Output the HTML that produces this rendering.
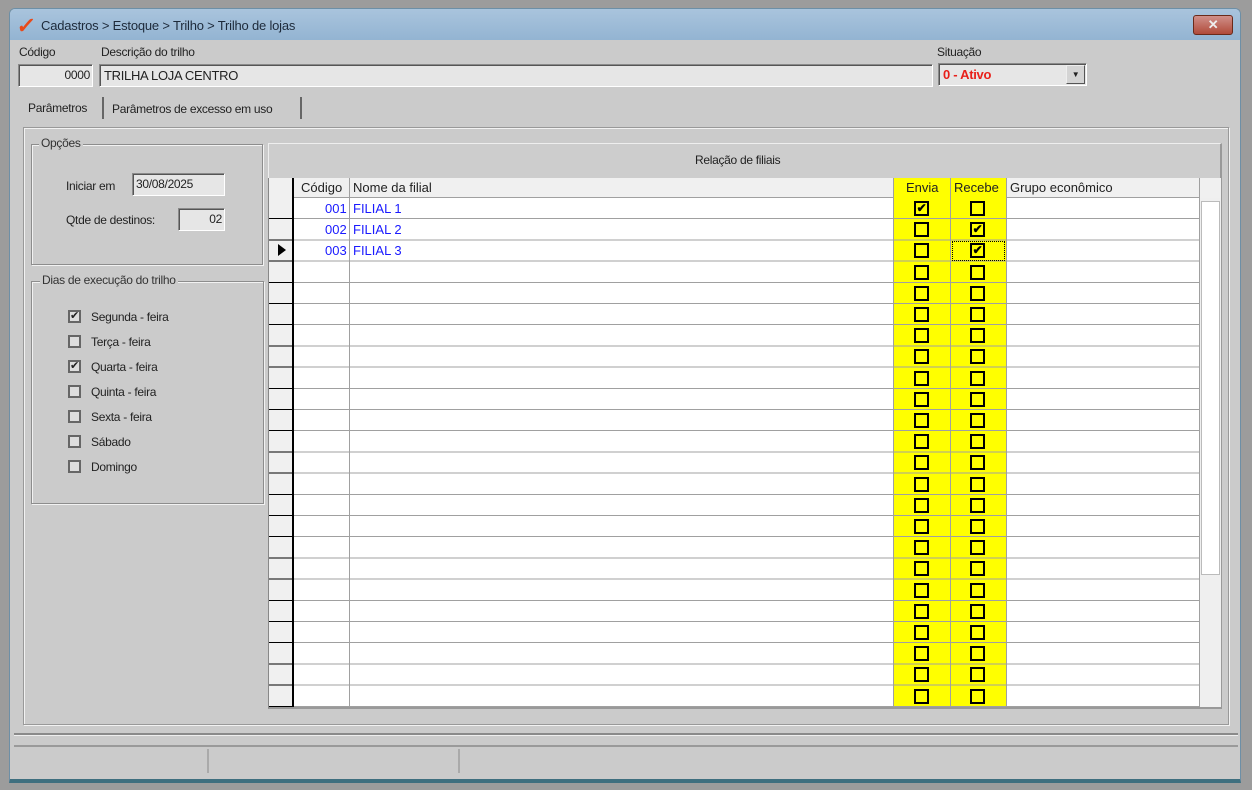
<!DOCTYPE html>
<html><head><meta charset="utf-8"><style>
*{box-sizing:border-box;margin:0;padding:0}
body{width:1252px;height:790px;background:#9c9c9c;font-family:"Liberation Sans",sans-serif;font-size:12px;color:#222;position:relative;overflow:hidden;letter-spacing:-0.3px}
.a{position:absolute}
.win{left:9px;top:8px;width:1232px;height:775px;background:#cbcbcb;border:1px solid #6d8fa6;border-radius:6px 6px 0 0;border-bottom:4px solid #3f6f7f}
.title{left:10px;top:9px;width:1230px;height:31px;background:linear-gradient(#a9c4dd,#93b4d2);border-radius:5px 5px 0 0}
.inp{background:#e6e6e6;border:1px solid #8a8a8a;border-right-color:#fff;border-bottom-color:#fff;box-shadow:inset 1px 1px 0 #555}
.grp{border:1px solid #8d8d8d;box-shadow:1px 1px 0 #f2f2f2, inset 1px 1px 0 #f2f2f2}
.lg{background:#cbcbcb;padding:0 2px;color:#333}
.cb{width:13px;height:13px;border:2px solid #666;background:#ddd;font-size:11px;line-height:9px;text-align:center;color:#222}
.k{width:15px;height:15px;border:2px solid #000;font-size:12px;line-height:11px;text-align:center;color:#000;font-weight:bold}
.v{top:0;width:1px;background:#a0a0a0;height:529px}
.t{font-size:13px;letter-spacing:0}
.blue{color:#1a1aff;font-size:13px;letter-spacing:0}
</style></head><body>
<div class="a win"></div>
<div class="a title"></div>
<div class="a" style="left:17px;top:13px;font-size:22px;color:#e84a1a;font-weight:bold;transform:skewX(-8deg)">✓</div>
<div class="a" style="left:41px;top:18px;font-size:13px;color:#1d2a3a;letter-spacing:-0.2px">Cadastros &gt; Estoque &gt; Trilho &gt; Trilho de lojas</div>
<div class="a" style="left:1193px;top:15px;width:40px;height:20px;background:linear-gradient(#d0908a,#b04a3a);border:1px solid #6a2a1a;border-radius:3px;color:#eee;font-weight:bold;text-align:center;line-height:17px;font-size:13px">✕</div>

<div class="a" style="left:19px;top:45px">Código</div>
<div class="a" style="left:101px;top:45px">Descrição do trilho</div>
<div class="a" style="left:937px;top:45px">Situação</div>
<div class="a inp" style="left:18px;top:64px;width:75px;height:23px;text-align:right;padding:3px 2px 0 0">0000</div>
<div class="a inp" style="left:99px;top:64px;width:834px;height:23px;padding:3px 0 0 4px;font-size:13px">TRILHA LOJA CENTRO</div>
<div class="a inp" style="left:938px;top:63px;width:149px;height:23px;padding:3px 0 0 4px;color:#e8201a;font-weight:bold;font-size:13px">0 - Ativo</div>
<div class="a" style="left:1066px;top:65px;width:19px;height:19px;background:#d4d4d4;border:1px solid #eee;border-right-color:#555;border-bottom-color:#555;font-size:8px;text-align:center;line-height:18px">▼</div>

<div class="a" style="left:28px;top:101px">Parâmetros</div>
<div class="a" style="left:102px;top:97px;width:2px;height:22px;background:#666"></div>
<div class="a" style="left:112px;top:102px">Parâmetros de excesso em uso</div>
<div class="a" style="left:300px;top:97px;width:2px;height:22px;background:#666"></div>

<div class="a grp" style="left:23px;top:127px;width:1206px;height:598px;border-color:#999"></div>

<div class="a grp" style="left:31px;top:144px;width:232px;height:121px"></div>
<div class="a lg" style="left:39px;top:136px">Opções</div>
<div class="a" style="left:66px;top:179px">Iniciar em</div>
<div class="a inp" style="left:132px;top:173px;width:93px;height:23px;padding:3px 0 0 3px">30/08/2025</div>
<div class="a" style="left:66px;top:213px">Qtde de destinos:</div>
<div class="a inp" style="left:178px;top:208px;width:47px;height:23px;text-align:right;padding:3px 2px 0 0">02</div>

<div class="a grp" style="left:31px;top:281px;width:233px;height:223px"></div>
<div class="a lg" style="left:40px;top:273px">Dias de execução do trilho</div>
<div class="a cb" style="left:68px;top:310px">✔</div><div class="a" style="left:91px;top:310px">Segunda - feira</div>
<div class="a cb" style="left:68px;top:335px"></div><div class="a" style="left:91px;top:335px">Terça - feira</div>
<div class="a cb" style="left:68px;top:360px">✔</div><div class="a" style="left:91px;top:360px">Quarta - feira</div>
<div class="a cb" style="left:68px;top:385px"></div><div class="a" style="left:91px;top:385px">Quinta - feira</div>
<div class="a cb" style="left:68px;top:410px"></div><div class="a" style="left:91px;top:410px">Sexta - feira</div>
<div class="a cb" style="left:68px;top:435px"></div><div class="a" style="left:91px;top:435px">Sábado</div>
<div class="a cb" style="left:68px;top:460px"></div><div class="a" style="left:91px;top:460px">Domingo</div>

<div class="a" style="left:268px;top:143px;width:954px;height:35px;background:#cdcdcd;border-top:1px solid #eee;border-left:1px solid #eee;border-right:2px solid #999"></div>
<div class="a" style="left:695px;top:153px">Relação de filiais</div>

<div class="a" style="left:268px;top:178px;width:954px;height:531px;background:#fff;border-right:2px solid #999;border-bottom:2px solid #999;border-left:1px solid #888">
 <div class="a" style="left:0;top:0;width:931px;height:20px;background:#f0f0f0;border-bottom:1px solid #a0a0a0"></div>
 <div class="a" style="left:0;top:0;width:24px;height:529px;background:#f0f0f0"></div>
 <div class="a" style="left:624px;top:0;width:57px;height:529px;background:#ffff00"></div>
 <div class="a" style="left:681px;top:0;width:56px;height:529px;background:#ffff00"></div>
 <div class="a" style="left:0;top:20px;width:931px;height:509px;background:repeating-linear-gradient(to bottom,transparent 0 20.2px,#a0a0a0 20.2px 21.2px)"></div>
 <div class="a" style="left:0;top:20px;width:24px;height:509px;background:repeating-linear-gradient(to bottom,transparent 0 20.2px,#000 20.2px 21.2px)"></div>
 <div class="a v" style="left:23px;background:#000;width:2px"></div>
 <div class="a v" style="left:80px"></div>
 <div class="a v" style="left:624px"></div>
 <div class="a v" style="left:681px"></div>
 <div class="a v" style="left:737px"></div>
 <div class="a v" style="left:930px"></div>
 <div class="a" style="left:931px;top:0;width:21px;height:20px;background:#f0f0f0"></div>
 <div class="a" style="left:931px;top:20px;width:21px;height:509px;background:#efefef"></div>
 <div class="a" style="left:932px;top:23px;width:19px;height:374px;background:#fff;border:1px solid #bbb"></div>
 <div class="a t" style="left:32px;top:2px">Código</div>
 <div class="a t" style="left:84px;top:2px">Nome da filial</div>
 <div class="a t" style="left:637px;top:2px">Envia</div>
 <div class="a t" style="left:685px;top:2px">Recebe</div>
 <div class="a t" style="left:741px;top:2px">Grupo econômico</div>
 <div class="a blue" style="left:56px;top:23px">001</div><div class="a blue" style="left:84px;top:23px">FILIAL 1</div>
 <div class="a blue" style="left:56px;top:44px">002</div><div class="a blue" style="left:84px;top:44px">FILIAL 2</div>
 <div class="a blue" style="left:56px;top:65px">003</div><div class="a blue" style="left:84px;top:65px">FILIAL 3</div>
 <div class="a" style="left:9px;top:66px;width:0;height:0;border-left:8px solid #000;border-top:6px solid transparent;border-bottom:6px solid transparent"></div>
 <div class="a" style="left:683px;top:63px;width:53px;height:20px;border:1px dotted #000"></div>
</div>
<div id="cbs"></div>
<script>
var h='';for(var i=0;i<24;i++){var y=178+20+i*21.2+3;
var e=i==0?'✔':'',r=(i==1||i==2)?'✔':'';
h+='<div class="a k" style="left:914px;top:'+y+'px">'+e+'</div><div class="a k" style="left:970px;top:'+y+'px">'+r+'</div>';}
document.getElementById('cbs').innerHTML=h;
</script>

<div class="a" style="left:14px;top:733px;width:1224px;height:2px;background:#8a8a8a"></div>
<div class="a" style="left:14px;top:735px;width:1224px;height:1px;background:#eee"></div>
<div class="a" style="left:14px;top:745px;width:1224px;height:2px;background:#9a9a9a"></div>
<div class="a" style="left:207px;top:749px;width:2px;height:24px;background:#aaa"></div>
<div class="a" style="left:458px;top:749px;width:2px;height:24px;background:#aaa"></div>
</body></html>
